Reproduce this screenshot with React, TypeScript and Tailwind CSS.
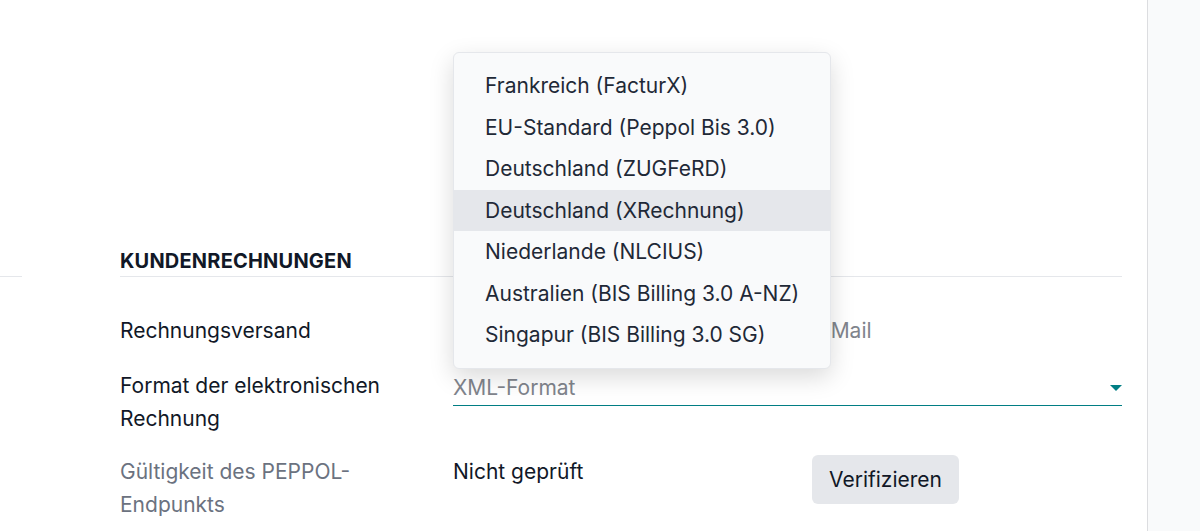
import React from 'react';

const formats = [
  'Frankreich (FacturX)',
  'EU-Standard (Peppol Bis 3.0)',
  'Deutschland (ZUGFeRD)',
  'Deutschland (XRechnung)',
  'Niederlande (NLCIUS)',
  'Australien (BIS Billing 3.0 A-NZ)',
  'Singapur (BIS Billing 3.0 SG)',
];

export default function App() {
  return (
    <div className="flex h-[531px] w-full overflow-hidden bg-white text-[21px] leading-[33px] text-[#111827] font-['Inter',sans-serif]">
      {/* Main form */}
      <div className="relative flex-1 bg-white pt-[247px] pr-[25px]">
        {/* Section header */}
        <div className="flex items-end">
          <div className="w-[22px] border-b border-[#e5e7eb]" />
          <div className="ml-[98px] flex-1 border-b border-[#e5e7eb] pb-[1px] text-[20px] font-bold uppercase leading-[28px] tracking-[0.2px] text-[#111827]">
            Kundenrechnungen
          </div>
        </div>

        <div className="ml-[120px] mt-[37px] flex flex-col">
          {/* Rechnungsversand */}
          <div className="flex">
            <div className="w-[333px] shrink-0">Rechnungsversand</div>
            <div className="flex-1 text-[#80848c]">
              <span className="ml-[316px]">Per E-Mail</span>
            </div>
          </div>

          {/* Format */}
          <div className="mt-[22px] flex">
            <div className="w-[333px] shrink-0">
              Format der elektronischen
              <br />
              Rechnung
            </div>
            <div className="flex-1">
              <div className="flex h-[37px] items-center justify-between border-b border-[#017e84]">
                <span className="text-[#80848c]">XML-Format</span>
                <svg width="12" height="7" viewBox="0 0 12 7" className="mt-[2px]">
                  <path d="M0 0 L12 0 L6 6 Z" fill="#017e84" />
                </svg>
              </div>
            </div>
          </div>

          {/* PEPPOL */}
          <div className="mt-[20px] flex">
            <div className="w-[333px] shrink-0 text-[#6b7280]">
              Gültigkeit des PEPPOL-
              <br />
              Endpunkts
            </div>
            <div className="flex flex-1 items-start">
              <div className="w-[359px]">Nicht geprüft</div>
              <button className="h-[49px] rounded-[6px] bg-[#e5e7eb] px-[17px] text-[21px] text-[#111827]">
                Verifizieren
              </button>
            </div>
          </div>
        </div>

        {/* Dropdown menu */}
        <div className="absolute left-[453px] top-[52px] w-[378px] rounded-[6px] border border-[#e5e7eb] bg-[#f9fafb] py-[12px] shadow-[0_8px_24px_rgba(0,0,0,0.15)]">
          {formats.map((f, i) => (
            <div
              key={f}
              className={
                'flex h-[41.5px] items-center whitespace-nowrap px-[31px] text-[#1f2937] ' +
                (i === 3 ? 'bg-[#e5e7eb]' : '')
              }
            >
              {f}
            </div>
          ))}
        </div>
      </div>

      {/* Right panel */}
      <div className="w-[53px] shrink-0 border-l border-[#dcdde0] bg-[#f9fafb]" />
    </div>
  );
}
